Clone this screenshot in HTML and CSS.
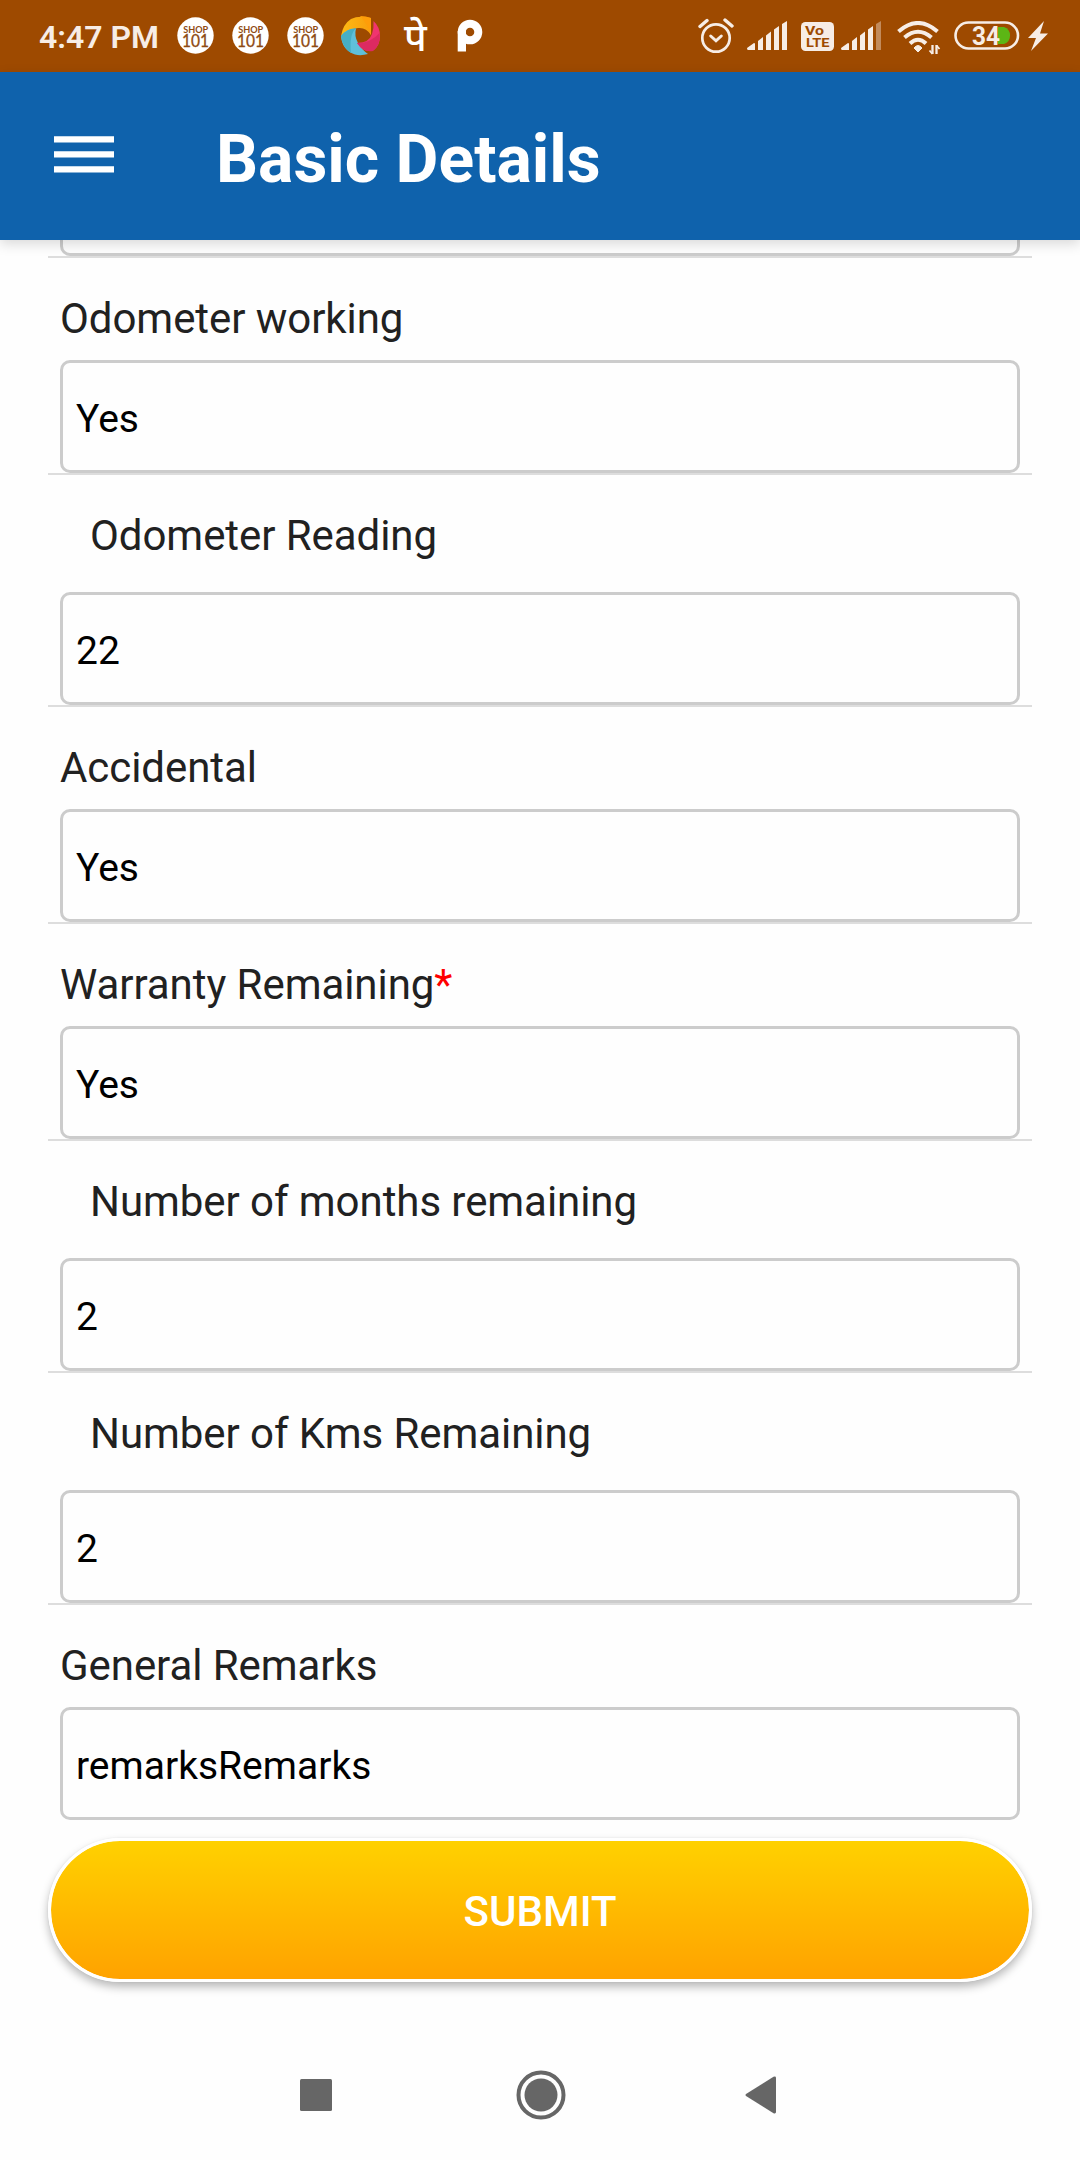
FILE: index.html
```html
<!DOCTYPE html>
<html lang="en">
<head>
<meta charset="utf-8">
<title>Basic Details</title>
<link rel="stylesheet" href="styles.css">
</head>
<body>
<svg class="defs" width="0" height="0" aria-hidden="true">
  <defs>
    <linearGradient id="amber" x1="0" x2="1"><stop offset="0" stop-color="#fdbb14"/><stop offset="1" stop-color="#f99d0c"/></linearGradient>
    <symbol id="shop" viewBox="0 0 37 37">
      <circle cx="18.5" cy="18.5" r="18.2" fill="#fff"/>
      <text x="18.7" y="16" class="shop-top" textLength="25" lengthAdjust="spacingAndGlyphs">SHOP</text>
      <text x="18.5" y="30" class="shop-num" textLength="27" lengthAdjust="spacingAndGlyphs">101</text>
    </symbol>
  </defs>
</svg>
<header class="status">
  <div class="status-left">
    <span class="time">4:47 PM</span>
    <svg class="shop" width="37" height="37"><use href="#shop"/></svg>
    <svg class="shop" width="37" height="37"><use href="#shop"/></svg>
    <svg class="shop" width="37" height="37"><use href="#shop"/></svg>
    <svg class="swirl" width="40" height="40" viewBox="0 0 40 40">
      <path d="M0 20Q2 8 10 3Q18-1 30 2V19Q25 11 17 12Q7 13 0 20z" fill="url(#amber)"/>
      <path d="M19 0Q25 0 30 2V19Q27 8 19 0z" fill="#ff9d09"/>
      <path d="M0 20Q6 12 15 12.500Q13 20 17 27Q21 34 27 38Q20 40 14 38.500Q1 34 0 20z" fill="#5fc0da"/>
      <path d="M0 20Q6 12 15 12.500Q8 18 10 37Q1 31 0 20z" fill="#47afc4"/>
      <path d="M32.500 5Q39 11 39 20Q39 29 33 34Q23 38 16 27Q28 27 31 18Q33 12 32.500 5z" fill="#f0356f"/>
      <path d="M38.500 17Q30 27 16 27Q23 37 32 35Q40 29 38.500 17z" fill="#dc2a61"/>
    </svg>
    <span class="pe">पे</span>
    <svg class="pay" width="26" height="34" viewBox="0 0 26 34">
      <circle cx="13" cy="13" r="8.300" fill="none" stroke="#fff" stroke-width="8"/>
      <path d="M.7 12h8.300v20.500H.7z" fill="#fff"/>
    </svg>
  </div>
  <div class="status-right">
    <svg class="alarm" width="36" height="36" viewBox="0 0 36 36" fill="none" stroke="#f7ede6" stroke-linecap="round">
      <circle cx="18" cy="20" r="13.700" stroke-width="2.700"/>
      <path d="M2 8.500l7-6M34 8l-7-6" stroke-width="3.400"/>
      <path d="M12.700 18l5.300 4.800 5.300-4.800" stroke-width="3"/>
    </svg>
    <svg class="sig1" width="41" height="30" viewBox="0 0 41 30" fill="#f7ede6">
      <path d="M0 27l7-5q1 0 1 1v6H1q-1 0-1-2zM11 20l5-4v13h-5zM19 14.500l5-4V29h-5zM27 8.500l5-3.500v24h-5zM35 3l5-3v29h-5z"/>
    </svg>
    <svg class="volte" width="33" height="29" viewBox="0 0 33 29">
      <rect width="33" height="29" rx="4.500" fill="#f7ede6"/>
      <text x="4" y="12.700" class="vo" textLength="19" lengthAdjust="spacingAndGlyphs">Vo</text>
      <text x="5" y="25.300" class="vo" textLength="23.500" lengthAdjust="spacingAndGlyphs">LTE</text>
    </svg>
    <svg class="sig2" width="41" height="30" viewBox="0 0 41 30" fill="#f7ede6">
      <path d="M0 27l7-5q1 0 1 1v6H1q-1 0-1-2zM11 20l5-4v13h-5zM19 14.500l5-4V29h-5zM27 8.500l5-3.500v24h-5z"/>
      <path d="M35 3l5-3v29h-5z" opacity=".4"/>
    </svg>
    <svg class="wifi" width="44" height="34" viewBox="0 0 44 34" fill="none" stroke="#f7ede6">
      <path d="M1.500 10.500Q21 -6.500 40.500 10.500M7.500 16.500Q21 5 34.500 16.500M13 22.500Q21 15 29 22.500" stroke-width="4"/>
      <path d="M17 27q4-5 8 0l-4 4z" fill="#f7ede6" stroke-width="1"/>
      <path d="M35.500 33v-9M39.500 24v9" stroke-width="2.300"/>
      <path d="M32.500 29.500l3 3.500M39.500 24.500l3 3.500" stroke-width="1.800"/>
    </svg>
    <svg class="battery" width="66" height="30" viewBox="0 0 66 30">
      <path d="M44 6h6a9 9 0 0 1 0 17h-6z" fill="#5cb615"/>
      <rect x="1.500" y="1.500" width="62.500" height="26" rx="13" fill="none" stroke="#f7ede6" stroke-width="2.600"/>
      <text x="18" y="24" class="pct" textLength="28" lengthAdjust="spacingAndGlyphs">34</text>
    </svg>
    <svg class="bolt" width="20" height="30" viewBox="0 0 20 30"><path d="M16 0L0 17h8L3 30 20 12.500h-8z" fill="#f7ede6"/></svg>
  </div>
</header>
<div class="appbar">
  <svg class="menu" width="60" height="38" viewBox="0 0 60 38" fill="#fff"><path d="M0 .3h60v6.300H0zM0 15.300h60v6.300H0zM0 30.300h60v6.300H0z"/></svg>
  <h1>Basic Details</h1>
</div>
<main>
  <div class="row first"><div class="field"></div></div>
  <div class="row"><label>Odometer working</label><div class="field">Yes</div></div>
  <div class="row sub"><label>Odometer Reading</label><div class="field">22</div></div>
  <div class="row"><label>Accidental</label><div class="field">Yes</div></div>
  <div class="row"><label>Warranty Remaining<span class="req">*</span></label><div class="field">Yes</div></div>
  <div class="row sub"><label>Number of months remaining</label><div class="field">2</div></div>
  <div class="row sub"><label>Number of Kms Remaining</label><div class="field">2</div></div>
  <div class="row last"><label>General Remarks</label><div class="field">remarksRemarks</div></div>
  <button class="submit">SUBMIT</button>
</main>
<nav class="navbar">
  <svg width="32" height="32" viewBox="0 0 32 32"><rect width="32" height="32" rx="1.500"/></svg>
  <svg class="home" width="50" height="50" viewBox="0 0 50 50"><circle cx="25" cy="25" r="22.500" fill="none" stroke="#666" stroke-width="4"/><circle cx="25" cy="25" r="16.500"/></svg>
  <svg width="31" height="38" viewBox="0 0 31 38"><path d="M1 18L28.500.8Q31 0 31 2v34q0 2-2.500 1.200L1 20q-1-1 0-2z"/></svg>
</nav>
</body>
</html>
```
FILE: styles.css
```css
* { box-sizing: border-box; }
body { margin: 0; width: 1080px; height: 2160px; overflow: hidden; background: #fefefe; font-family: Roboto, "Noto Sans", sans-serif; display: flex; flex-direction: column; }
svg { display: block; flex: none; }
.defs { position: absolute; }

.status { height: 72px; flex: none; background: #9e4a00; display: flex; justify-content: space-between; align-items: flex-start; }
.status-left, .status-right { display: flex; align-items: flex-start; }
.time { width: 138px; margin: 18px 0 0 39px; font-size: 32px; line-height: 38px; font-weight: 600; color: #f7ede6; white-space: nowrap; }
.shop { margin: 17px 18px 0 0; }
.shop-top { font: 700 9px Lato, sans-serif; fill: #8f4a12; text-anchor: middle; }
.shop-num { font: 400 16.500px Lato, sans-serif; fill: #8f4a12; stroke: #8f4a12; stroke-width: .3px; text-anchor: middle; }
.swirl { margin: 16px 0 0 -1px; }
.pe { width: 24px; margin: 18px 0 0 23px; font: 500 39px/48px "Noto Sans Devanagari", "Noto Sans", sans-serif; color: #fff; }
.pay { margin: 19px 0 0 29px; }
.status-right { padding-right: 32px; }
.alarm { margin: 18px 13px 0 0; }
.sig1 { margin: 21px 13px 0 0; }
.volte { margin: 22px 7px 0 0; }
.sig2 { margin: 21px 15px 0 0; }
.wifi { margin: 21px 13px 0 0; }
.battery { margin: 21px 8px 0 0; }
.bolt { margin-top: 21px; }
.vo { font: 700 13px/1 Roboto, sans-serif; fill: #9e4a00; }
.pct { font: 700 26px Roboto, sans-serif; fill: #f7ede6; }

.appbar { position: relative; height: 168px; flex: none; background: #0f62ac; display: flex; align-items: flex-start; padding-left: 54px; box-shadow: 0 4px 12px rgba(0, 0, 0, .15); }
.menu { margin-top: 64px; }
h1 { margin: 49px 0 0 102px; font-size: 66px; line-height: 78px; font-weight: 700; color: #fff; white-space: nowrap; }

main { flex: 1; padding: 0 48px; display: flex; flex-direction: column; }
.row { flex: none; padding: 36px 12px 0; border-bottom: 2px solid #ddd; display: flex; flex-direction: column; }
label { height: 66px; font-size: 42px; line-height: 50px; letter-spacing: -.06px; color: #212121; white-space: nowrap; }
.sub label { height: 81px; padding-left: 30px; }
.field { height: 113px; border: 3px solid #ccc; border-radius: 10px; padding: 33px 13px 0; font-size: 39px; line-height: 46px; color: #000; }
.first { padding-top: 0; }
.first .field { height: 16px; padding: 0; border-top: 0; border-radius: 0 0 10px 10px; }
.last { border-bottom: 0; }
.req { color: #f00; }
.submit { flex: none; height: 144px; margin-top: 18px; padding: 4px 0 0; border: 3px solid #fff; border-radius: 72px; background: linear-gradient(#ffd100, #ffa200) padding-box; color: #fff; font: 500 42px/50px Roboto, sans-serif; box-shadow: 0 5px 10px rgba(0, 0, 0, .28), 0 0 2px rgba(0, 0, 0, .08); }

.navbar { flex: none; height: 130px; display: flex; align-items: center; justify-content: space-between; padding: 0 304px 0 300px; fill: #666; }
.home { margin-left: 4px; }
```
